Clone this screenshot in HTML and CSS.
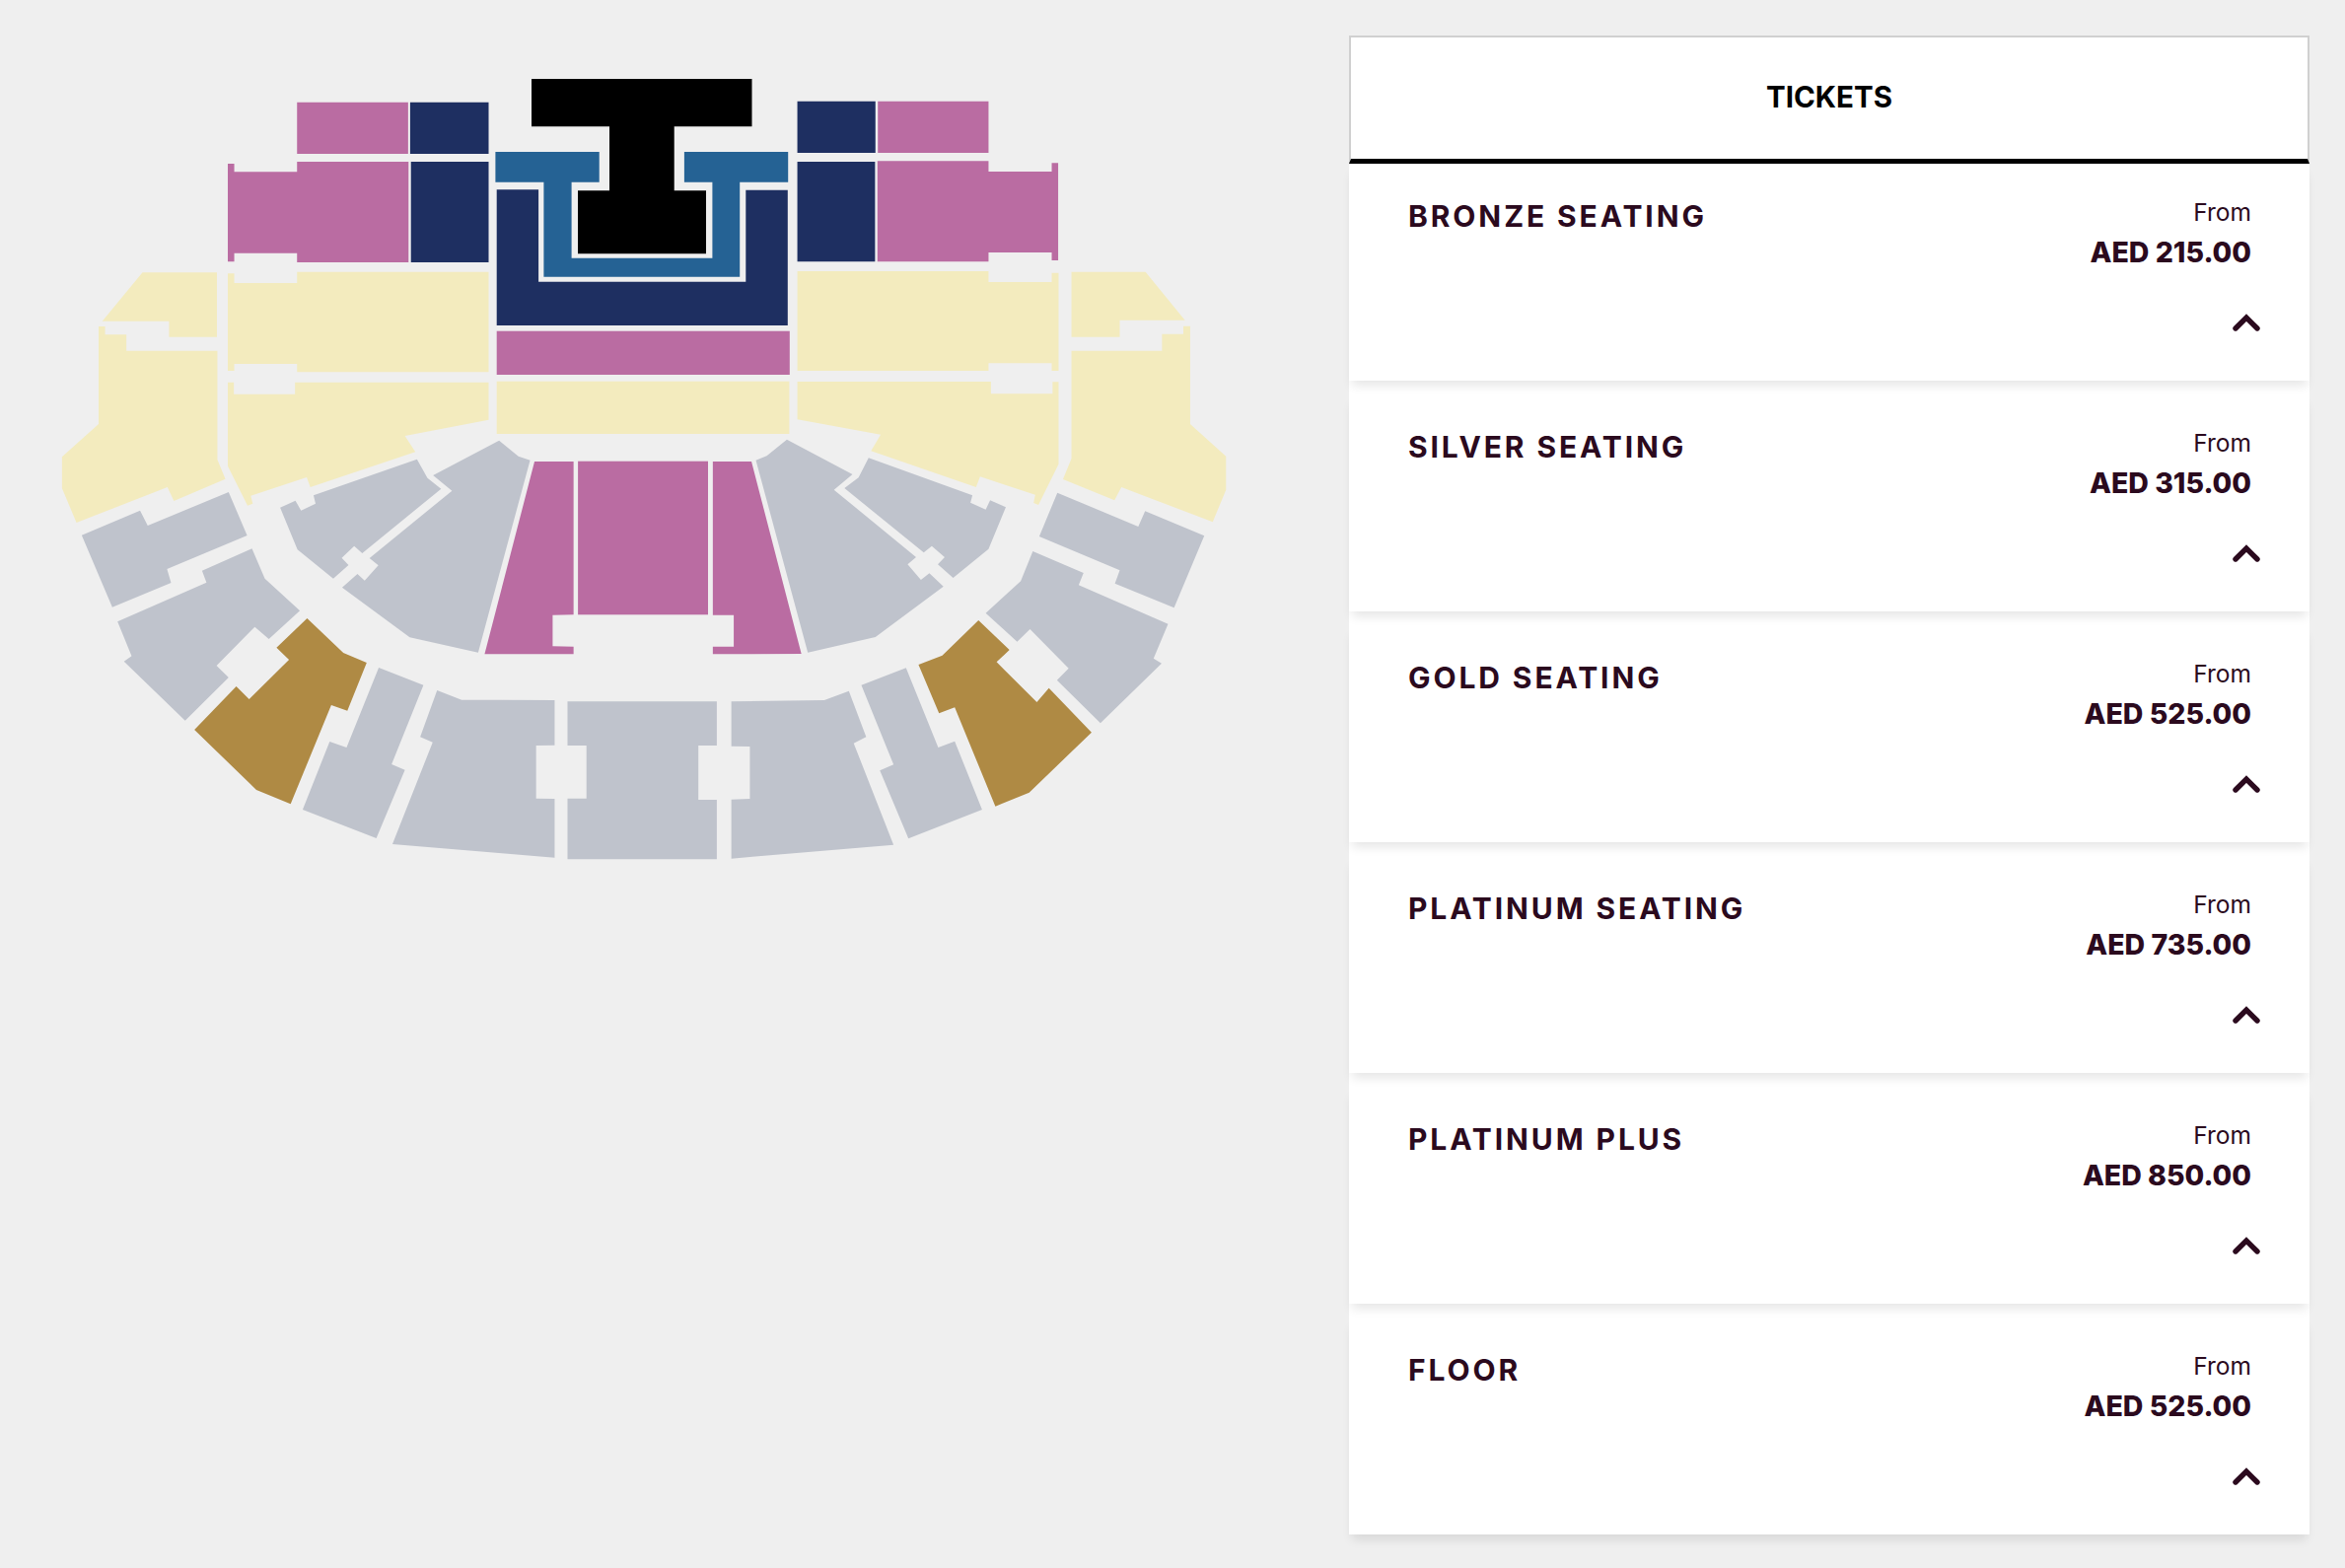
FILE: index.html
```html
<!DOCTYPE html>
<html lang="en">
<head>
<meta charset="utf-8">
<title>Tickets</title>
<link rel="stylesheet" href="styles.css">
</head>
<body>
<main class="page">
  <section class="map-col">
    <svg class="map" viewBox="0 0 1368 900" width="1368" height="900" aria-label="Seating map">
      <g class="gl" transform="translate(40,60) scale(.40816,.33333)">
        <polygon class="pink" points="640,131 916,131 916,288 640,288"/>
        <polygon class="navy" points="921,131 1116,131 1116,288 921,288"/>
        <polygon class="pink" points="468,318 484,318 484,343 640,343 640,312 917,312 917,618 640,618 640,590 484,590 484,616 468,616"/>
        <polygon class="navy" points="923,312 1116,312 1116,618 923,618"/>
        <polygon class="yellow" points="468,652 484,652 484,681 640,681 640,647 1116,647 1116,952 640,952 640,927 484,927 484,948 468,948"/>
        <polygon class="yellow" points="468,983 483,983 483,1019 635,1019 635,983 1116,983 1116,1097 908,1146 934,1195 673,1302 664,1272 525,1328 530,1352 517,1358 468,1238"/>
        <polygon class="yellow" points="256,649 441,649 441,845 322,845 322,797 156,797"/>
        <polygon class="yellow" points="147,813 163,813 163,838 216,838 216,887 442,887 442,1218 462,1277 334,1344 318,1302 92,1410 56,1305 56,1210 147,1110"/>
      </g>
      <g class="gr" transform="translate(640,60) scale(.40816,.33333)">
        <polygon class="navy" points="413,128 607,128 607,285 413,285"/>
        <polygon class="pink" points="613,128 888,128 888,285 613,285"/>
        <polygon class="navy" points="413,312 606,312 606,616 413,616"/>
        <polygon class="pink" points="612,310 888,310 888,342 1045,342 1045,316 1061,316 1061,612 1045,612 1045,588 888,588 888,616 612,616"/>
        <polygon class="yellow" points="413,645 888,645 888,678 1045,678 1045,650 1062,650 1062,948 1045,948 1045,925 888,925 888,948 413,948"/>
        <polygon class="yellow" points="413,981 894,981 894,1018 1047,1018 1047,982 1062,982 1062,1232 1012,1356 1000,1350 1004,1325 867,1270 857,1302 596,1192 620,1142 413,1096"/>
        <polygon class="yellow" points="1094,647 1278,647 1376,794 1214,794 1214,845 1094,845"/>
        <polygon class="yellow" points="1094,887 1319,887 1319,836 1372,836 1372,812 1389,812 1389,1110 1478,1208 1478,1310 1445,1408 1218,1302 1201,1342 1073,1278 1094,1215"/>
      </g>
      <polygon class="black" points="539,80 762.5,80 762.5,128.3 683.7,128.3 683.7,193.3 716,193.3 716,257.3 586,257.3 586,193.3 618,193.3 618,128.3 539,128.3"/>
      <polygon class="blue" points="502.4,154 607.7,154 607.7,184.7 579.6,184.7 579.6,261.7 722.4,261.7 722.4,184.7 693.9,184.7 693.9,154 799.2,154 799.2,184.7 750.2,184.7 750.2,280.7 551.4,280.7 551.4,184.7 502.4,184.7"/>
      <polygon class="navy" points="503.7,192.3 546.1,192.3 546.1,285.7 756.3,285.7 756.3,192.8 798.8,192.8 798.8,330 503.7,330"/>
      <rect class="pink" x="503.7" y="335.7" width="297.1" height="44.3"/>
      <rect class="yellow" x="503.7" y="386.7" width="296.7" height="53.3"/>
      <rect class="pink" x="586.1" y="467.7" width="131.9" height="155.6"/>
      <polygon class="gray" points="575.5,711.3 726.9,711.3 726.9,756 708.2,756 708.2,811 726.9,811 726.9,871.3 575.5,871.3 575.5,809.7 594.7,809.7 594.7,756 575.5,756"/>
      <g transform="translate(40,440) scale(.40816,.33333)">
        <polygon class="pink" points="1230,84 1327,84 1327,550 1275,551 1275,646 1327,647 1327,670 1106,670"/>
        <polygon class="gray" points="105,308 250,233 269,279 470,177 516,309 317,411 327,453 181,527"/>
        <polygon class="gray" points="194,571 415,452 404,416 528,349 560,440 647,538 570,624 535,587 440,705 470,741 362,872 210,692 229,676"/>
        <polygon class="gray" points="598,224 636,203 650,233 686,212 681,187 938,77 964,134 998,167 802,363 782,341 751,377 768,399 730,440 641,352"/>
        <polygon class="gray" points="978,126 1142,20 1190,68 1219,80 1090,665 920,619 752,467 790,426 808,446 842,400 820,378 1025,173"/>
        <polygon class="gold" points="665,561 755,666 813,696 765,842 725,825 624,1126 539,1083 385,900 489,768 521,807 620,687 589,650"/>
        <polygon class="gray" points="843,711 954,764 875,1005 908,1022 837,1230 654,1143 721,936 763,954"/>
        <polygon class="gray" points="988,780 1049,809 1280,810 1280,947 1234,948 1234,1109 1280,1110 1280,1289 877,1248 977,938 946,922"/>
      </g>
      <g transform="translate(640,440) scale(.40816,.33333)">
        <polygon class="pink" points="203,84 299,84 423,669 203,670 203,647 255,647 255,551 203,551"/>
        <polygon class="gray" points="249,814 480,810 541,782 584,922 553,941 652,1250 249,1292 249,1112 295,1110 295,951 249,950"/>
        <polygon class="gray" points="572,764 683,712 763,954 804,935 872,1143 689,1231 618,1024 652,1006"/>
        <polygon class="gold" points="863,567 940,657 908,694 1008,816 1038,773 1144,908 989,1091 905,1133 804,832 765,850 714,702 773,674"/>
        <polygon class="gray" points="998,357 1124,423 1112,460 1334,578 1298,683 1318,698 1166,880 1058,749 1087,713 991,594 959,632 881,545 968,448"/>
        <polygon class="gray" points="1059,179 1260,282 1277,235 1424,310 1349,529 1202,455 1214,415 1014,312"/>
        <polygon class="gray" points="590,73 848,187 843,209 881,230 892,202 931,223 888,350 800,438 762,397 779,375 747,341 727,361 530,165 565,133"/>
        <polygon class="gray" points="387,17 550,123 504,170 708,375 687,397 720,444 741,424 776,464 607,618 439,665 310,80 337,67"/>
      </g>
    </svg>
  </section>

  <aside class="panel">
    <h1 class="panel-head">TICKETS</h1>
    <ul class="list">
      <li class="item">
        <h2 class="name">BRONZE SEATING</h2>
        <div class="price"><span class="from">From</span><strong class="amount">AED 215.00</strong>
          <svg class="chev" viewBox="0 0 28 18" width="28" height="18"><path d="M3 15 14 4 25 15"/></svg></div>
      </li>
      <li class="item">
        <h2 class="name">SILVER SEATING</h2>
        <div class="price"><span class="from">From</span><strong class="amount">AED 315.00</strong>
          <svg class="chev" viewBox="0 0 28 18" width="28" height="18"><path d="M3 15 14 4 25 15"/></svg></div>
      </li>
      <li class="item">
        <h2 class="name">GOLD SEATING</h2>
        <div class="price"><span class="from">From</span><strong class="amount">AED 525.00</strong>
          <svg class="chev" viewBox="0 0 28 18" width="28" height="18"><path d="M3 15 14 4 25 15"/></svg></div>
      </li>
      <li class="item">
        <h2 class="name">PLATINUM SEATING</h2>
        <div class="price"><span class="from">From</span><strong class="amount">AED 735.00</strong>
          <svg class="chev" viewBox="0 0 28 18" width="28" height="18"><path d="M3 15 14 4 25 15"/></svg></div>
      </li>
      <li class="item">
        <h2 class="name">PLATINUM PLUS</h2>
        <div class="price"><span class="from">From</span><strong class="amount">AED 850.00</strong>
          <svg class="chev" viewBox="0 0 28 18" width="28" height="18"><path d="M3 15 14 4 25 15"/></svg></div>
      </li>
      <li class="item">
        <h2 class="name">FLOOR</h2>
        <div class="price"><span class="from">From</span><strong class="amount">AED 525.00</strong>
          <svg class="chev" viewBox="0 0 28 18" width="28" height="18"><path d="M3 15 14 4 25 15"/></svg></div>
      </li>
    </ul>
  </aside>
</main>
</body>
</html>
```
FILE: styles.css
```css
* { box-sizing: border-box; }
html, body { margin: 0; height: 100%; }
body {
  background: #efefef;
  font-family: "Inter", "Noto Sans", sans-serif;
  color: #2b0a1e;
}
.page { display: flex; height: 1590px; padding-right: 36px; overflow: hidden; }
.map-col { width: 1368px; flex: none; }
.map { display: block; filter: blur(.4px); }
.pink { fill: #ba6ca2; }
.navy { fill: #1e2f61; }
.blue { fill: #256294; }
.black { fill: #000; }
.yellow { fill: #f3ebbe; }
.gray { fill: #bfc3cc; }
.gold { fill: #af8a44; }

.panel { width: 974px; margin-top: 36px; flex: none; }
.panel-head {
  margin: 0;
  height: 130px;
  padding-bottom: 3px;
  display: flex;
  align-items: center;
  justify-content: center;
  background: #fff;
  border: 2px solid #d0d0d0;
  border-bottom: 5px solid #000;
  color: #000;
  font-size: 29.5px;
  font-weight: 700;
}
.list { list-style: none; margin: 0; padding: 0; background: #fff; display: flex; flex-direction: column; gap: 14px; }
.item {
  height: 220px;
  padding: 32px 59px 0 60px;
  display: flex;
  justify-content: space-between;
  background: #fff;
  box-shadow: 0 8px 10px -3px rgba(0,0,0,.1);
}
.name { margin: 3px 0 0; font-size: 30px; font-weight: 700; letter-spacing: 2.9px; line-height: 36px; }
.price { display: flex; flex-direction: column; align-items: flex-end; }
.from { font-size: 24.5px; line-height: 34px; font-weight: 400; }
.amount { font-size: 28.5px; font-weight: 800; line-height: 44px; margin-top: 2px; }
.chev { margin-top: 40px; margin-right: -9px; }
.chev path { fill: none; stroke: #2b0a1e; stroke-width: 5.4; stroke-linecap: round; }
```
